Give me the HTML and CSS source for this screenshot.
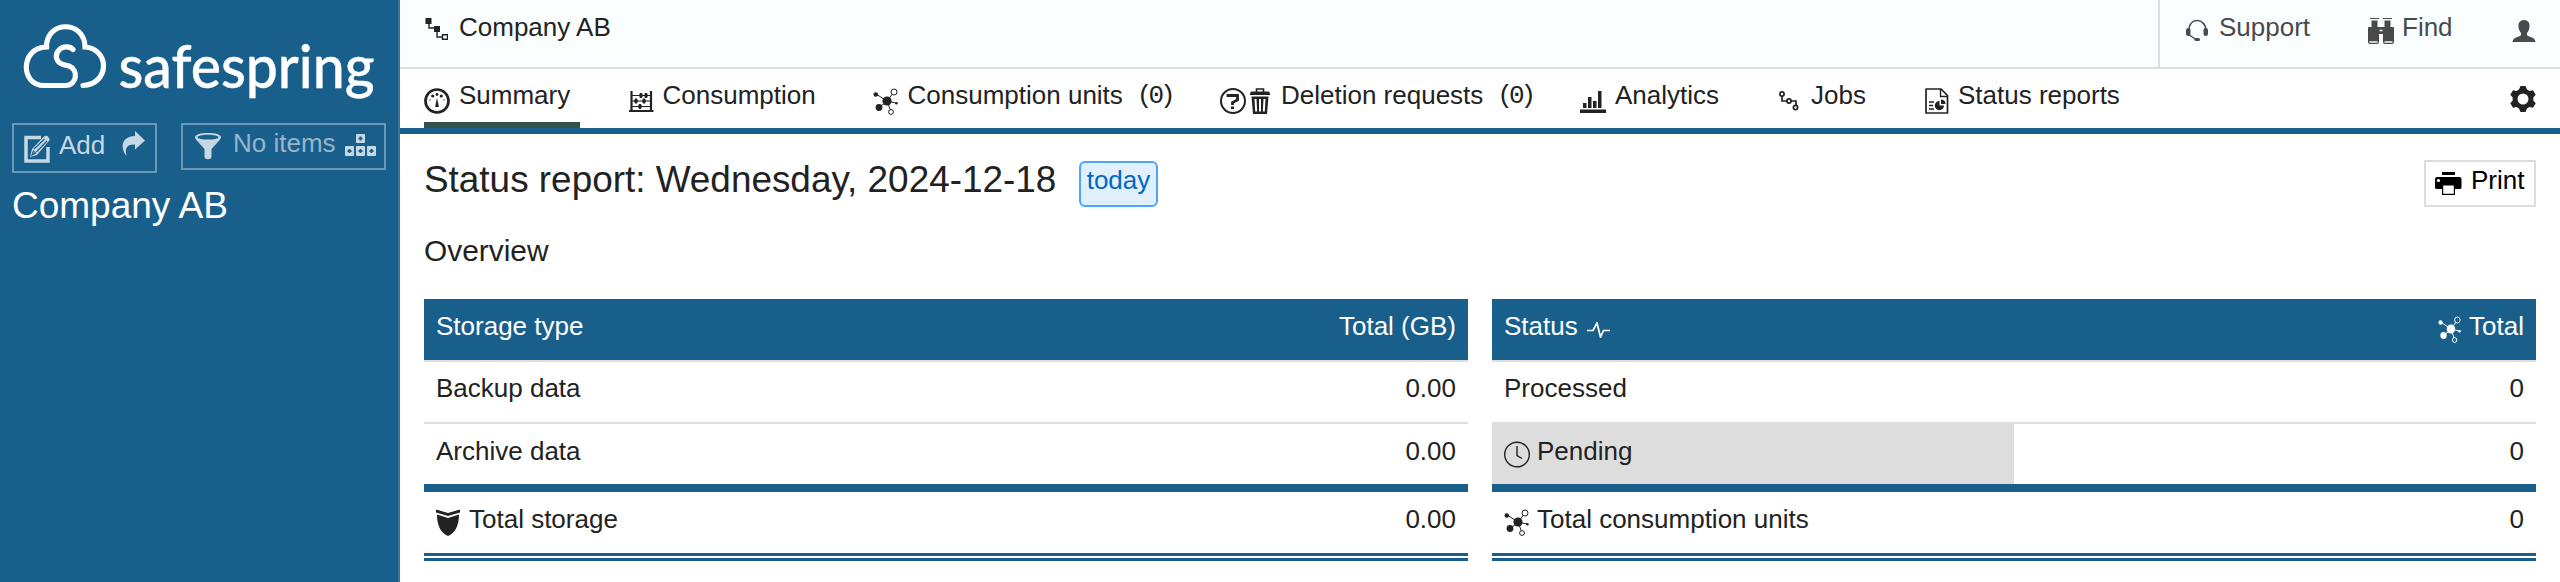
FILE: index.html
```html
<!DOCTYPE html>
<html lang="en">
<head>
<meta charset="utf-8">
<title>Company AB – Status report</title>
<link rel="stylesheet" href="styles.css">
</head>
<body>
<svg class="defs" width="0" height="0">
  <symbol id="units" viewBox="0 0 26 27">
    <path d="M3 6l11 7M5.500 19.500l9-6M14 13l5.200-6.600M14 13l9 2M14 13l3.300 8.800" stroke="currentColor" stroke-width="1"/>
    <circle cx="14" cy="13" r="4.600" fill="currentColor"/><circle cx="2.800" cy="6.500" r="2.300" fill="currentColor"/><circle cx="6" cy="19.500" r="3.400" fill="currentColor"/><circle cx="23.400" cy="15.200" r="1.300" fill="currentColor"/>
    <circle class="hollow" cx="21" cy="4" r="3" stroke="currentColor" stroke-width="1"/><circle class="hollow" cx="18" cy="24" r="2.400" stroke="currentColor" stroke-width="1"/>
  </symbol>
</svg>
<div class="app">
  <aside class="sidebar">
    <svg class="logo" width="376" height="104" viewBox="0 0 376 104" fill="none">
      <path d="M73 49.500c-3-3.500-10-3.500-14 .5-4.500 4.500-3.500 12 4 14.500l6 1.500c10 4 8 19-3.500 19.500H44c-24 0-24-38 2.500-38.500C46 20 85 20 85 47c25 2 25 37-2 38.500" stroke="#fff" stroke-width="5.200" stroke-linecap="round" stroke-linejoin="miter"/>
      <text class="wordmark" x="118.500" y="88" textLength="256" lengthAdjust="spacingAndGlyphs">safespring</text>
    </svg>
    <div class="tools">
      <div class="tool add">
        <svg width="26" height="28" viewBox="0 0 26 28"><path d="M17 2.500H2V26h22V12" fill="none" stroke="currentColor" stroke-width="3.500"/><path d="M6 22l2-8L20 1.500q3-2 5 1.500 1.500 2-1 4L13 20z" fill="currentColor"/><path d="M10 14L20.500 4M12.500 17L23 6M8 20l1.500-4 2 2z" stroke="#195f8b" stroke-width="1.200" fill="none"/></svg>
        <span>Add</span>
        <svg class="arrow" width="23" height="26" viewBox="0 0 23 26" fill="currentColor"><path d="M13 0l10 9.500L13 18.500v-5C4 13 3 18 4.500 25-2 17-1 5.500 13 5z"/></svg>
      </div>
      <div class="tool items">
        <svg width="26" height="27" viewBox="0 0 26 27"><path fill="currentColor" fill-rule="evenodd" d="M13 0c7 0 13 1.500 13 4.200 0 1.300-1 2.300-2.500 4L16.500 16v8c0 3-7 3-7 0v-8l-7-7.800C1 6.500 0 5.500 0 4.200 0 1.500 6 0 13 0zm0 1.700C7 1.700 2.500 3 2.500 4.200S7 6.600 13 6.600 23.500 5.500 23.500 4.200 19 1.700 13 1.700z"/></svg>
        <span>No items</span>
        <svg class="boxes" width="31" height="22" viewBox="0 0 31 22" fill="currentColor"><rect x="11" width="9" height="9" rx="1"/><rect y="12" width="9" height="10" rx="1"/><rect x="11" y="12" width="9" height="10" rx="1"/><rect x="22" y="12" width="9" height="10" rx="1"/><path d="M13.500 4.500h4M15.500 2.500v4M2.500 17h4M4.500 15v4M13.500 17h4M15.500 15v4M24.500 17h4M26.500 15v4" stroke="#195f8b" stroke-width="1.800"/></svg>
      </div>
    </div>
    <div class="company">Company AB</div>
  </aside>
  <div class="content">
    <header class="topbar">
      <div class="crumb">
        <svg width="24" height="24" viewBox="0 0 24 24"><path d="M1.500 1h6v6h-6zM10 9h6v6h-6z" fill="currentColor"/><path d="M5 7v4h5M13 15v5h6M18.500 17.800h5v4.500h-5z" fill="none" stroke="currentColor" stroke-width="1.400"/></svg>
        <span>Company AB</span>
      </div>
      <div class="account">
        <div class="support"><svg width="23" height="23" viewBox="0 0 23 23"><path d="M3 12C2-2 20-2 20 12M2.500 15.500L10 20.500" fill="none" stroke="currentColor" stroke-width="1.500"/><rect y="9" width="4.500" height="8" rx="2.200" fill="currentColor"/><rect x="17.500" y="9" width="4.500" height="8" rx="2.200" fill="currentColor"/><rect x="8.500" y="19" width="5.500" height="3" rx="1.500" fill="currentColor"/></svg><span>Support</span></div>
        <div class="find"><svg width="26" height="26" viewBox="0 0 26 26"><path d="M2 .500h9M15 .500h9" stroke="currentColor"/><path fill="currentColor" d="M3.500 2.500h6V9h7V2.500h6V9H25q1 0 1 1v14q0 2-2 2h-7q-2 0-2-2v-8h-4v8q0 2-2 2H2q-2 0-2-2V10q0-1 1-1h2.500z"/><path d="M1.500 24h8M16.500 24h8M11.500 12.500h3" stroke="#fafeff" stroke-width="1.500"/></svg><span>Find</span></div>
        <svg class="user" width="24" height="22" viewBox="0 0 24 22" fill="currentColor"><path d="M12 0c4 0 6 3 5.500 7-.3 3-1.500 5-2.500 6v2c1 2 8 1.500 8.500 7H.500C1 16.500 8 17 9 15v-2C8 12 6.800 10 6.500 7 6 3 8 0 12 0z"/></svg>
      </div>
    </header>
    <nav class="tabs">
      <a class="tab active"><svg width="26" height="26" viewBox="0 0 26 26"><circle cx="13" cy="13" r="11.500" fill="none" stroke="currentColor" stroke-width="2.700"/><path d="M13 10l2 9h-4z" fill="currentColor"/><g fill="currentColor"><circle cx="13" cy="6.500" r="1.400"/><circle cx="8.700" cy="8" r="1.600"/><circle cx="17.300" cy="8" r="1.600"/><circle cx="6" cy="12" r=".7"/><circle cx="20" cy="12" r=".7"/></g></svg><span>Summary</span></a>
      <a class="tab"><svg class="abacus" width="26" height="22" viewBox="0 0 26 22"><path d="M3.500 0v20M23 0v20M1 20h24.500" fill="none" stroke="currentColor" stroke-width="2.200"/><path d="M3.500 4.500h19M3.500 10h19M3.500 15.500h19" stroke="currentColor" stroke-width="1.200"/><path fill="currentColor" d="M12 2h2l1 2.500-1 2.500h-2l-1-2.500zM17 2h2l1 2.500L19 7h-2l-1-2.500zM7 7.500h2l1 2.500-1 2.500H7L6 10zM15 7.500h2l1 2.500-1 2.500h-2L14 10zM11 13h2l1 2.500-1 2.500h-2l-1-2.500z"/></svg><span>Consumption</span></a>
      <a class="tab"><svg class="unit-ico" width="26" height="27"><use href="#units"/></svg><span>Consumption units</span><span class="count">(0)</span></a>
      <a class="tab deletion"><svg width="26" height="26" viewBox="0 0 26 26"><circle cx="13" cy="13" r="12" fill="none" stroke="currentColor" stroke-width="2"/><path d="M8 9V7.500h9.500V12l-5 2.500V17" fill="none" stroke="currentColor" stroke-width="2.800"/><path d="M11 18.500h3V21h-3z" fill="currentColor"/></svg><svg class="trash" width="20" height="26" viewBox="0 0 20 26"><path d="M6.500 4V1h7v3" fill="none" stroke="currentColor" stroke-width="1.600"/><path fill="currentColor" d="M0 7q0-3.500 2-3.500h16q2 0 2 3.500zM1.500 8.500h17L17 26H3z"/><path d="M5.500 11l.7 12.500M10 11v12.500M14.500 11l-.7 12.500" stroke="#fff" stroke-width="2"/></svg><span>Deletion requests</span><span class="count">(0)</span></a>
      <a class="tab"><svg class="chart" width="26" height="22" viewBox="0 0 26 22" fill="currentColor"><path d="M0 18.500h26V22H0zM3 12h3.500v5H3zM8 6h3.500v11H8zM13 10h3.500v7H13zM18 0h3.500v17H18z"/></svg><span>Analytics</span></a>
      <a class="tab"><svg class="jobs" width="26" height="20" viewBox="0 0 26 20" fill="none" stroke="currentColor" stroke-width="1.700"><circle cx="6" cy="3" r="2.100"/><circle cx="13" cy="10" r="2.100"/><circle cx="19.500" cy="16.500" r="2.100"/><path d="M6 5v5h5M15 10h5v4"/></svg><span>Jobs</span></a>
      <a class="tab status-tab"><svg width="24" height="26" viewBox="0 0 24 26"><path d="M1 1h15l6.500 6.500V25H1z" fill="none" stroke="currentColor" stroke-width="1.700" stroke-linejoin="round"/><path d="M15.500 1v7.500h7" fill="none" stroke="currentColor" stroke-width="1.400"/><path d="M4 14h5M4 17.500h4M4 21h5" stroke="currentColor" stroke-width="1.500"/><path fill="currentColor" d="M14.500 13v4.500H19A4.600 4.600 0 1 1 14.500 13zM16 11.500a4.600 4.600 0 0 1 4.500 4.500H16z"/></svg><span>Status reports</span></a>
      <svg class="gear" width="26" height="26" viewBox="-13 -13 26 26"><path fill="currentColor" fill-rule="evenodd" d="M-2.500-13h5l1.500 3.500 2.500 1.400 3.500-.6 2.700 4.500L10.300-1.500v3l2.400 2.700L10 8.700l-3.500-.6L4 9.500 2.500 13h-5L-4 9.500l-2.500-1.400-3.500.6-2.700-4.500 2.400-2.700v-3l-2.400-2.700L-10-8.700l3.500.6L-4-9.500zM0-5.500A5.500 5.500 0 1 0 0 5.500 5.500 5.500 0 1 0 0-5.500z"/></svg>
    </nav>
    <main class="report">
      <div class="heading">
        <h1>Status report: Wednesday, 2024-12-18</h1>
        <span class="today">today</span>
        <button class="print"><svg width="28" height="24" viewBox="0 0 28 24"><path fill="currentColor" d="M8 0h13v3H8zM3 5h22.500q2 0 2 2v8.500q0 1.500-2 1.500H3q-2 0-2-1.500V7q0-2 2-2z"/><circle cx="4.500" cy="8.500" r="1.600" fill="#fff"/><path d="M8.600 13h11.800v9.400H8.600z" fill="#fff" stroke="currentColor" stroke-width="1.200"/></svg><span>Print</span></button>
      </div>
      <h2>Overview</h2>
      <div class="tables">
        <section class="table">
          <div class="row head"><span>Storage type</span><span>Total (GB)</span></div>
          <div class="row first"><span>Backup data</span><span>0.00</span></div>
          <div class="row"><span>Archive data</span><span>0.00</span></div>
          <div class="row total"><span class="label storage"><svg width="24" height="27" viewBox="0 0 24 27" fill="currentColor"><path d="M0 .500l12 3.500 12-3.500v3L12 7 0 3.500zM1 5.500L12 9l11-3.500C23 17 19 24 12 27 5 24 1 17 1 5.500z"/></svg>Total storage</span><span>0.00</span></div>
        </section>
        <section class="table">
          <div class="row head"><span class="label status">Status<svg width="24" height="16" viewBox="0 0 24 16"><path d="M0 8.500h6L10 1l3.500 14 3-6.500H23" fill="none" stroke="currentColor" stroke-width="1.700"/></svg></span><span class="label sum"><svg width="24" height="27" viewBox="0 0 26 27" preserveAspectRatio="none"><use href="#units" width="26" height="27"/></svg>Total</span></div>
          <div class="row first"><span>Processed</span><span>0</span></div>
          <div class="row pending"><span class="label clock"><svg width="26" height="27" viewBox="0 0 26 27" fill="none" stroke="currentColor" stroke-width="1.400"><circle cx="13" cy="13.500" r="12.300"/><path d="M13 5v9.500l5 3"/></svg>Pending</span><span>0</span></div>
          <div class="row total"><span class="label"><svg width="26" height="27"><use href="#units"/></svg>Total consumption units</span><span>0</span></div>
        </section>
      </div>
    </main>
  </div>
</div>
</body>
</html>
```

FILE: styles.css
```css
* { box-sizing: border-box; }
body { margin: 0; font: 26px/40px "Liberation Sans", Arial, sans-serif; color: #222; background: #fff; }
svg { display: block; flex: none; }
.defs { position: absolute; }
.hollow { fill: none; }
.app { display: flex; height: 582px; overflow: hidden; }

.sidebar { width: 400px; flex: none; background: #195f8b; border-right: 2px solid #3a7299; color: #fff; }
.logo { width: 398px; height: 123px; padding-bottom: 19px; padding-right: 22px; overflow: visible; }
.wordmark { font: 500 60px Lato, sans-serif; fill: #fff; stroke: #fff; stroke-width: .4px; }
.tools { display: flex; gap: 24px; padding-left: 12px; align-items: flex-start; height: 61px; }
.tool { display: flex; align-items: flex-start; border: 2px solid #6b9ab8; color: #c6d8e3; white-space: nowrap; }
.add { width: 145px; height: 50px; padding: 0 0 0 10px; }
.add svg { margin-top: 10px; }
.add span { margin-left: 9px; }
.add .arrow { margin: 6px 0 0 17px; }
.items { width: 205px; height: 47px; padding-left: 12px; }
.items svg { margin-top: 8px; }
.items span { margin: -2px 0 0 12px; color: #95b6cb; }
.items .boxes { margin: 9px 0 0 9px; }
.company { padding: 2px 0 0 12px; font-size: 37px; line-height: 40px; }

.content { flex: 1; min-width: 0; }
.topbar { display: flex; justify-content: space-between; height: 69px; padding-left: 24px; background: #fafeff; border-bottom: 2px solid #ddd; line-height: 54px; }
.crumb { display: flex; }
.crumb svg { margin: 17px 11px 0 0; }
.account { display: flex; width: 402px; border-left: 2px solid #ddd; color: #4a4a4a; }
.support { display: flex; width: 182px; padding-left: 26px; }
.support svg { margin: 19px 10px 0 0; }
.find { display: flex; width: 144px; padding-left: 26px; }
.find svg { margin: 18px 8px 0 0; }
.user { margin: 20px 24px 0 auto; }

.tabs { display: grid; grid-template-columns: 203.500px 245px 347.500px 360px 196px 148px 1fr 26px; height: 65px; padding: 0 24px; border-bottom: 6px solid #195f8b; line-height: 52px; white-space: nowrap; }
.tab { display: flex; }
.tab > svg:first-child { margin: 19px 0 0; width: 26px; }
.tab > svg + span { margin-left: 9px; }
.status-tab > svg + span { margin-left: 8px; }
.active { width: 156px; border-bottom: 6px solid #2f524c; }
.tab > .abacus:first-child, .tab > .chart:first-child { margin-top: 22px; }
.tab > .jobs:first-child { margin-top: 22px; }
.tab > svg:last-of-type:not(:first-child) { margin: 19px 0 0 4px; }
.tab .trash + span { margin-left: 11px; }
.count { font: 26px/54px "Liberation Mono", monospace; letter-spacing: -4px; margin-left: 14px; }
.gear { margin-top: 17px; }

.report { padding: 0 24px; }
.heading { display: flex; height: 97px; padding-top: 26px; }
h1 { margin: 0; font-size: 36.900px; font-weight: 400; line-height: 39px; width: 655px; white-space: nowrap; }
.today { width: 79px; height: 46px; border: 2px solid #4aa5ff; border-radius: 6px; background: #e0f0ff; color: #0066c8; text-align: center; line-height: 34px; margin-top: 1px; }
.print { display: flex; width: 112px; height: 47px; margin-left: auto; border: 2px solid #ddd; background: #fff; color: #000; padding: 0 0 0 8px; font: inherit; line-height: 36px; }
.print svg { margin: 10px 9px 0 0; }
h2 { margin: 0; font-size: 29.900px; font-weight: 400; line-height: 39px; height: 68px; }
.tables { display: grid; grid-template-columns: 1fr 1fr; gap: 24px; }
.table { border-bottom: 8px double #195f8b; }
.row { display: flex; justify-content: space-between; padding: 0 12px; height: 60px; line-height: 54px; }
.head { height: 63px; background: #195f8b; color: #fff; border-bottom: 2px solid #ddd; }
.first { height: 62px; line-height: 52px; border-bottom: 2px solid #ddd; }
.pending { background: linear-gradient(#ddd, #ddd) no-repeat 0 0 / 50% 100%; }
.total { height: 69px; border-top: 8px solid #195f8b; }
.label { display: flex; gap: 7px; }
.label svg { margin-top: 17px; }
.storage { gap: 9px; }
.status { gap: 9px; }
.status svg { margin-top: 23px; }
```
